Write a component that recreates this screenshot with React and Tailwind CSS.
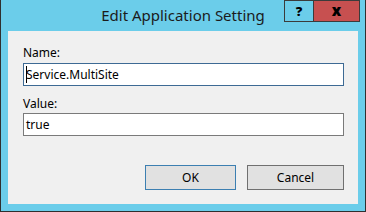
import React from "react";

export default function App() {
  const font = { fontFamily: '"Segoe UI", "Noto Sans", "Liberation Sans", sans-serif' };
  return (
    <div
      className="relative w-[366px] h-[212px] bg-[#6bcdea] border-l border-r border-b border-[#2f2f2f] flex flex-col overflow-hidden"
      style={font}
    >
      <div className="relative h-[31px] flex items-center justify-center">
        <span className="text-[15px] text-[#1b1b1b] leading-none -mt-[1px]">Edit Application Setting</span>
        <div className="absolute top-0 right-[5px] flex h-[22px]">
          <div className="w-[29px] h-[22px] border border-[#3b3b3b] border-r-0 flex items-center justify-center text-[13px] font-black text-black leading-none">
            ?
          </div>
          <div className="w-[47px] h-[22px] bg-[#c75050] border border-[#3b3b3b] flex items-center justify-center text-[15px] font-black text-black leading-none pb-[2px]">
            x
          </div>
        </div>
      </div>
      <div className="mx-[7px] h-[173px] bg-[#f0f0f0] flex flex-col pl-[15px] pr-[14px] pt-[14px]">
        <div className="text-[12px] leading-[16px] text-black">Name:</div>
        <div className="mt-[2px] h-[23px] bg-white border border-[#3d6a94] flex items-center pl-[2px] text-[12px] text-black relative">
          <span className="w-[1px] h-[17px] bg-black mr-[-1px]"></span>
          <span>Service.MultiSite</span>
        </div>
        <div className="mt-[10px] text-[12px] leading-[16px] text-black">Value:</div>
        <div className="mt-[1px] h-[23px] bg-white border border-[#7a7a7a] flex items-center pl-[2px] text-[12px] text-black">
          true
        </div>
        <div className="mt-[29px] flex justify-end gap-[11px]">
          <div className="w-[91px] h-[25px] bg-[#e1e1e1] border border-[#3c7fb1] flex items-center justify-center text-[12px] text-black">
            OK
          </div>
          <div className="w-[97px] h-[25px] bg-[#e1e1e1] border border-[#707070] flex items-center justify-center text-[12px] text-black">
            Cancel
          </div>
        </div>
      </div>
    </div>
  );
}
